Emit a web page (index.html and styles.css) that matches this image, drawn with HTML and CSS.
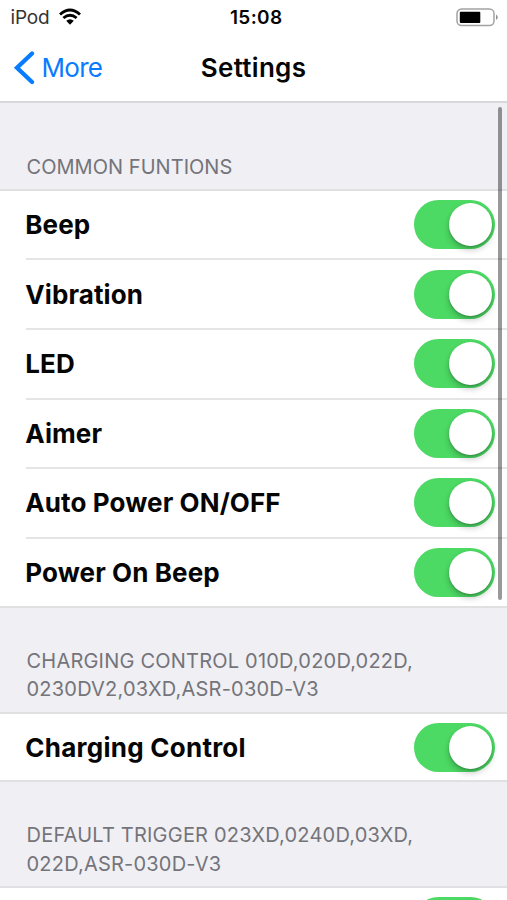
FILE: index.html
```html
<!DOCTYPE html>
<html lang="en">
<head>
<meta charset="utf-8">
<title>Settings</title>
<link rel="stylesheet" href="styles.css">
</head>
<body>
<div class="screen">
  <header class="top">
    <div class="status">
      <div class="carrier"><span>iPod</span>
        <svg class="wifi" width="24" height="18" viewBox="0 0 24 18">
          <path d="M2 6.500Q12-2.500 22 6.500M5.400 10Q12 4.300 18.600 10" fill="none" stroke="#000" stroke-width="2.900"/>
          <path d="M8.200 12.700Q12 9.600 15.800 12.700L12 16.700Z"/>
        </svg>
      </div>
      <span class="time">15:08</span>
      <svg class="battery" width="44" height="19" viewBox="0 0 44 19">
        <rect x="2" y="1" width="37" height="16.500" rx="4.500" fill="none" stroke="#a2a2a2" stroke-width="1.500"/>
        <rect x="4.800" y="3.800" width="20.500" height="11.200" rx="1"/>
        <path d="M41 6.500Q44.500 9.200 41 12Z" fill="#929292"/>
      </svg>
    </div>
    <nav class="nav">
      <a class="back"><svg width="22" height="36" viewBox="0 0 22 36"><path d="M19 3.500L4 17.800L19 32" fill="none" stroke="#087cff" stroke-width="4.300" stroke-linecap="round"/></svg><span>More</span></a>
      <h1>Settings</h1>
      <span></span>
    </nav>
  </header>
  <main class="content">
    <h2 class="heading first"><span>COMMON FUNTIONS</span></h2>
    <ul class="group functions">
      <li><span>Beep</span><i class="switch"></i></li>
      <li><span>Vibration</span><i class="switch"></i></li>
      <li><span>LED</span><i class="switch"></i></li>
      <li><span>Aimer</span><i class="switch"></i></li>
      <li><span>Auto Power ON/OFF</span><i class="switch"></i></li>
      <li><span>Power On Beep</span><i class="switch"></i></li>
    </ul>
    <h2 class="heading"><span>CHARGING CONTROL 010D,020D,022D,</span><span>0230DV2,03XD,ASR-030D-V3</span></h2>
    <ul class="group charging">
      <li><span>Charging Control</span><i class="switch"></i></li>
    </ul>
    <h2 class="heading"><span>DEFAULT TRIGGER 023XD,0240D,03XD,</span><span>022D,ASR-030D-V3</span></h2>
    <ul class="group">
      <li><span></span><i class="switch"></i></li>
    </ul>
    <div class="scrollbar"></div>
  </main>
</div>
</body>
</html>
```
FILE: styles.css
```css
* { box-sizing: border-box; }
body, h1, h2, ul { margin: 0; padding: 0; }
body { background: #efeff4; font-family: Inter, "Liberation Sans", sans-serif; color: #050505; overflow: hidden; }
.screen { width: 507px; height: 900px; overflow: hidden; }
.top { height: 103px; background: #fff; border-bottom: 2px solid #d8d8da; }
.status { display: grid; grid-template-columns: 1fr auto 1fr; align-items: center; height: 34px; padding: 0 8px 0 10.500px; font-size: 19px; }
.carrier { display: flex; align-items: center; gap: 8.500px; color: #333; letter-spacing: -.2px; }
.wifi { display: block; }
.time { font-weight: 600; letter-spacing: .4px; padding-left: 3px; }
.battery { justify-self: end; }
.nav { display: grid; grid-template-columns: 1fr auto 1fr; align-items: center; height: 67px; padding: 0 13px; }
.back { display: flex; align-items: center; gap: 6.500px; color: #087cff; font-size: 26px; letter-spacing: -.7px; }
h1 { font-size: 26px; font-weight: 600; letter-spacing: .3px; }
.content { position: relative; height: 797px; overflow: hidden; }
.heading { display: flex; flex-direction: column; justify-content: flex-end; height: 104px; padding: 0 26px 8px 26.500px; font-size: 20px; line-height: 28.500px; font-weight: 400; color: #74747a; letter-spacing: .21px; white-space: nowrap; }
.heading span { align-self: flex-start; }
.first { height: 86px; letter-spacing: .04px; }
.group { list-style: none; background: #fff; border-top: 2px solid #e0e0e3; border-bottom: 2px solid #e0e0e3; }
.group li { display: flex; align-items: center; justify-content: space-between; height: 69.600px; margin-left: 26px; padding-right: 12.500px; border-bottom: 2px solid #e5e5e7; font-size: 26px; font-weight: 650; letter-spacing: .1px; }
.group li span { margin-left: -.7px; }
.functions li:first-child { height: 69.400px; }
.group li:last-child { height: 66.500px; border-bottom: 0; }
.functions li:last-child { height: 67.100px; }
.charging li { letter-spacing: .25px; }
.switch { position: relative; width: 81px; height: 49px; border-radius: 25px; background: #4cd964; }
.switch::after { content: ""; position: absolute; top: 3px; right: 3px; width: 43px; height: 43px; border-radius: 50%; background: #fff; box-shadow: 0 4px 6px rgba(0,0,0,.22), 0 1px 2px rgba(0,0,0,.2); }
.scrollbar { position: absolute; top: 4px; right: 5px; width: 4px; height: 493px; border-radius: 2px; background: rgba(0,0,0,.4); }
```
